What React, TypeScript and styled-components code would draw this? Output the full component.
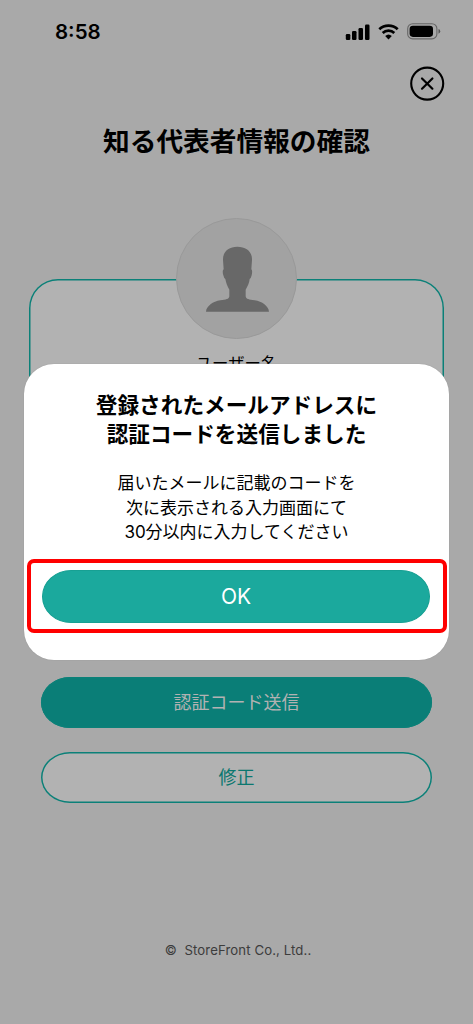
import React from "react";
import styled, { createGlobalStyle } from "styled-components";

const Global = createGlobalStyle`
  *, *::before, *::after { box-sizing: border-box; }
  body {
    margin: 0;
    background: #a9a9a9;
    font-family: Inter, "Noto Sans CJK JP", sans-serif;
    color: #000;
  }
  h1, h2, p { margin: 0; }
  button { font: inherit; padding: 0; }
`;

const Screen = styled.main`
  position: relative;
  display: flex;
  flex-direction: column;
  width: 473px;
  height: 1024px;
  overflow: hidden;
  background: #a9a9a9;
`;

const StatusBar = styled.header`
  display: flex;
  align-items: center;
  justify-content: space-between;
  height: 64px;
  padding: 0 31px 0 55px;
`;

const Time = styled.span`
  font-size: 20.5px;
  font-weight: 600;
  line-height: 24px;
`;

const StatusIcons = styled.div`
  display: flex;
  align-items: center;
  gap: 8px;
  padding-bottom: 1px;
`;

const CloseRow = styled.div`
  display: flex;
  justify-content: flex-end;
  height: 54px;
  padding: 2px 28px 0 0;
`;

const CloseButton = styled.button`
  display: block;
  width: 35px;
  height: 35px;
  border: 0;
  background: none;
`;

const Title = styled.h1`
  height: 46px;
  font-size: 26.7px;
  font-weight: 600;
  line-height: 46px;
  text-align: center;
  white-space: nowrap;
`;

const ProfileCard = styled.section`
  display: flex;
  flex-direction: column;
  align-items: center;
  height: 340px;
  margin: 115px 29px 0;
  padding-top: 1px;
  border-radius: 29px;
  background: #b2b2b2;
  box-shadow: inset 0 0 0 1.5px #0b8078;
`;

const Avatar = styled.div`
  display: flex;
  flex-shrink: 0;
  justify-content: center;
  width: 121px;
  height: 121px;
  margin-top: -62px;
  padding: 27px 0 0 1px;
  border: 1px solid #999;
  border-radius: 50%;
  background: #a2a2a2;
`;

const UserLabel = styled.p`
  margin-top: 12px;
  font-size: 16.4px;
  line-height: 24px;
`;

const Actions = styled.div`
  display: flex;
  flex-direction: column;
  gap: 24px;
  padding: 58px 41px 0;
`;

const ActionButton = styled.button<{ $filled?: boolean }>`
  height: 51px;
  border: 0;
  border-radius: 29px / 25.5px;
  background: ${(p) => (p.$filled ? "#0a7e77" : "#b2b2b2")};
  box-shadow: inset 0 0 0 1.5px #0b8078;
  color: ${(p) => (p.$filled ? "#b2b2b2" : "#0b776f")};
  font-size: 18px;
  line-height: 50px;
`;

const Footer = styled.footer`
  margin-top: 137px;
  padding-left: 3px;
  font-size: 13.2px;
  line-height: 20px;
  letter-spacing: 0.1px;
  text-align: center;
  color: #3c3c3c;
`;

const Dialog = styled.section`
  position: absolute;
  top: 364px;
  left: 24px;
  display: flex;
  flex-direction: column;
  width: 425px;
  height: 296px;
  padding: 27px 3px 0;
  border-radius: 30px;
  background: #fff;
  box-shadow: 0 0 1px #888;
`;

const DialogTitle = styled.h2`
  font-size: 21.65px;
  font-weight: 600;
  line-height: 29px;
  text-align: center;
  white-space: nowrap;
`;

const DialogText = styled.p`
  margin: 22px 0 14px;
  font-size: 17px;
  line-height: 24.5px;
  text-align: center;
  white-space: nowrap;
`;

const Highlight = styled.div`
  width: 420px;
  height: 74px;
  padding: 7px 11px 0;
  border: 4px solid #f00;
  border-radius: 7px;
`;

const OkButton = styled.button`
  display: block;
  width: 388px;
  height: 53px;
  border: 1px solid #17a093;
  border-radius: 29px / 26.5px;
  background: #1ba99d;
  color: #fff;
  font-size: 21px;
  line-height: 51px;
`;

const SignalIcon = () => (
  <svg width="25" height="16" viewBox="0 0 25 16">
    <rect x="0.8" y="10" width="4.5" height="6" rx="1.2" />
    <rect x="7" y="7" width="4.5" height="9" rx="1.2" />
    <rect x="13.5" y="4" width="4.5" height="12" rx="1.2" />
    <rect x="20" y="0.6" width="4.5" height="15.4" rx="1.2" />
  </svg>
);

const WifiIcon = () => (
  <svg width="21" height="16" viewBox="0 0 21 16">
    <g fill="none" stroke="#000" strokeWidth="2.7">
      <path d="M1.3 5.3C6.4 .5 14.6 .5 19.7 5.3" />
      <path d="M4.7 8.9C7.9 5.9 13.1 5.9 16.3 8.9" />
    </g>
    <path d="M7.2 12Q10.5 9 13.8 12L10.5 15.5Z" />
  </svg>
);

const BatteryIcon = () => (
  <svg width="35" height="17" viewBox="0 0 35 17">
    <rect x=".7" y=".7" width="29.2" height="15.2" rx="5" fill="none" stroke="#666" strokeWidth="1.1" />
    <rect x="2.6" y="2.7" width="23.4" height="11.2" rx="3.3" />
    <path d="M31.5 6Q33.2 6.5 33.2 8.3T31.5 10.7Z" fill="#555" />
  </svg>
);

const CloseIcon = () => (
  <svg width="35" height="35" viewBox="0 0 35 35" fill="none" stroke="#000" strokeLinecap="round">
    <circle cx="17.2" cy="17.6" r="16" strokeWidth="2.1" />
    <path d="M12 12.5 22.4 22.7M22.4 12.5 12 22.7" strokeWidth="2.2" />
  </svg>
);

const PersonIcon = () => (
  <svg width="65" height="67" viewBox="135 108 195 201">
    <path
      fill="#686868"
      d="M232 110C260 110 277 126 276 150L274 178C278 181 276 191 275 196Q273 205 269 207C268 219 263 228 257 239V259C258 268 267 269 284 271C306 274 326 289 327 305H138C139 289 159 274 181 271C198 269 207 268 208 259V239C202 228 198 219 196 207Q192 205 190 196C188 191 187 181 191 178L189 150C188 126 205 110 232 110Z"
    />
  </svg>
);

export default function App() {
  return (
    <>
      <Global />
      <Screen>
        <StatusBar>
          <Time>8:58</Time>
          <StatusIcons>
            <SignalIcon />
            <WifiIcon />
            <BatteryIcon />
          </StatusIcons>
        </StatusBar>
        <CloseRow>
          <CloseButton aria-label="閉じる">
            <CloseIcon />
          </CloseButton>
        </CloseRow>
        <Title>知る代表者情報の確認</Title>
        <ProfileCard>
          <Avatar>
            <PersonIcon />
          </Avatar>
          <UserLabel>ユーザー名</UserLabel>
        </ProfileCard>
        <Actions>
          <ActionButton $filled>認証コード送信</ActionButton>
          <ActionButton>修正</ActionButton>
        </Actions>
        <Footer>©&nbsp; StoreFront Co., Ltd..</Footer>
        <Dialog role="dialog">
          <DialogTitle>
            登録されたメールアドレスに
            <br />
            認証コードを送信しました
          </DialogTitle>
          <DialogText>
            届いたメールに記載のコードを
            <br />
            次に表示される入力画面にて
            <br />
            30分以内に入力してください
          </DialogText>
          <Highlight>
            <OkButton>OK</OkButton>
          </Highlight>
        </Dialog>
      </Screen>
    </>
  );
}
